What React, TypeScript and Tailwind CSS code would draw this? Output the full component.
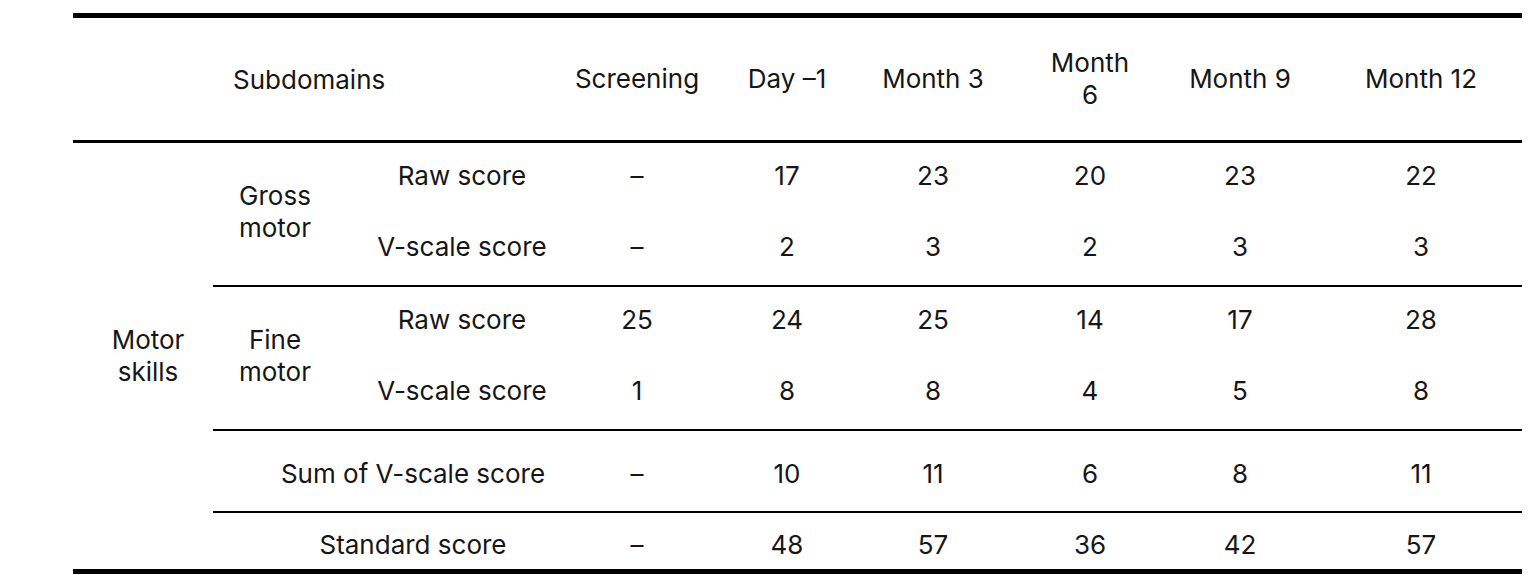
import React from 'react';

type Row = Readonly<{ values: string[] }>;

// left offsets (margin-left) between the six value cells, each 100px wide
const gaps = ['ml-0', 'ml-[50px]', 'ml-[46px]', 'ml-[57px]', 'ml-[50px]', 'ml-[81px]'];

const ValueCells = ({ values }: Row) => (
  <div className="flex">
    {values.map((value, index) => (
      <div key={index} className={`${gaps[index]} flex w-[100px] shrink-0 justify-center whitespace-nowrap`}>
        {value}
      </div>
    ))}
  </div>
);

const SubRow = ({ label, values }: { label: string; values: string[] }) => (
  <div className="flex flex-1 items-center pb-[7px]">
    <div className="flex w-[250px] shrink-0 justify-center whitespace-nowrap">{label}</div>
    <ValueCells values={values} />
  </div>
);

const Group = ({
  title,
  rows,
}: {
  title: [string, string];
  rows: { label: string; values: string[] }[];
}) => (
  <div className="flex h-[142px]">
    <div className="flex w-[124px] shrink-0 flex-col items-center justify-center pb-[4px] leading-[32px]">
      <span>{title[0]}</span>
      <span>{title[1]}</span>
    </div>
    <div className="flex flex-1 flex-col">
      {rows.map((row) => (
        <SubRow key={row.label} label={row.label} values={row.values} />
      ))}
    </div>
  </div>
);

const SummaryRow = ({ label, values, height }: { label: string; values: string[]; height: string }) => (
  <div className={`flex items-center ${height}`}>
    <div className="flex w-[374px] shrink-0 justify-center pl-[26px] whitespace-nowrap">{label}</div>
    <ValueCells values={values} />
  </div>
);

export default function App() {
  return (
    <div className="h-[575px] w-[1535px] overflow-hidden bg-white pt-[13px] pl-[73px] font-['Inter',sans-serif] text-[26px] text-[#161616]">
      <div className="w-[1449px]">
        <div className="h-[5px] bg-black" />

        <div className="flex h-[122px] items-center">
          <div className="w-[140px] shrink-0" />
          <div className="w-[374px] shrink-0 pl-[20px] whitespace-nowrap">Subdomains</div>
          <div className="flex items-center leading-[32px]">
            {['Screening', 'Day –1', 'Month 3', 'Month\n6', 'Month 9', 'Month 12'].map((head, index) => (
              <div
                key={head}
                className={`${gaps[index]} flex w-[100px] shrink-0 flex-col items-center whitespace-nowrap`}
              >
                {head.split('\n').map((part) => (
                  <span key={part}>{part}</span>
                ))}
              </div>
            ))}
          </div>
        </div>

        <div className="h-[3px] bg-black" />

        <div className="flex">
          <div className="flex w-[140px] shrink-0 flex-col items-center justify-center pl-[10px] leading-[32px]">
            <span>Motor</span>
            <span>skills</span>
          </div>
          <div className="flex flex-1 flex-col">
            <Group
              title={['Gross', 'motor']}
              rows={[
                { label: 'Raw score', values: ['–', '17', '23', '20', '23', '22'] },
                { label: 'V-scale score', values: ['–', '2', '3', '2', '3', '3'] },
              ]}
            />
            <div className="h-[2px] bg-black" />
            <Group
              title={['Fine', 'motor']}
              rows={[
                { label: 'Raw score', values: ['25', '24', '25', '14', '17', '28'] },
                { label: 'V-scale score', values: ['1', '8', '8', '4', '5', '8'] },
              ]}
            />
            <div className="h-[2px] bg-black" />
            <SummaryRow
              label="Sum of V-scale score"
              values={['–', '10', '11', '6', '8', '11']}
              height="h-[80px] pt-[4px]"
            />
            <div className="h-[2px] bg-black" />
            <SummaryRow
              label="Standard score"
              values={['–', '48', '57', '36', '42', '57']}
              height="h-[56px] pt-[6px]"
            />
          </div>
        </div>

        <div className="h-[5px] bg-black" />
      </div>
    </div>
  );
}
